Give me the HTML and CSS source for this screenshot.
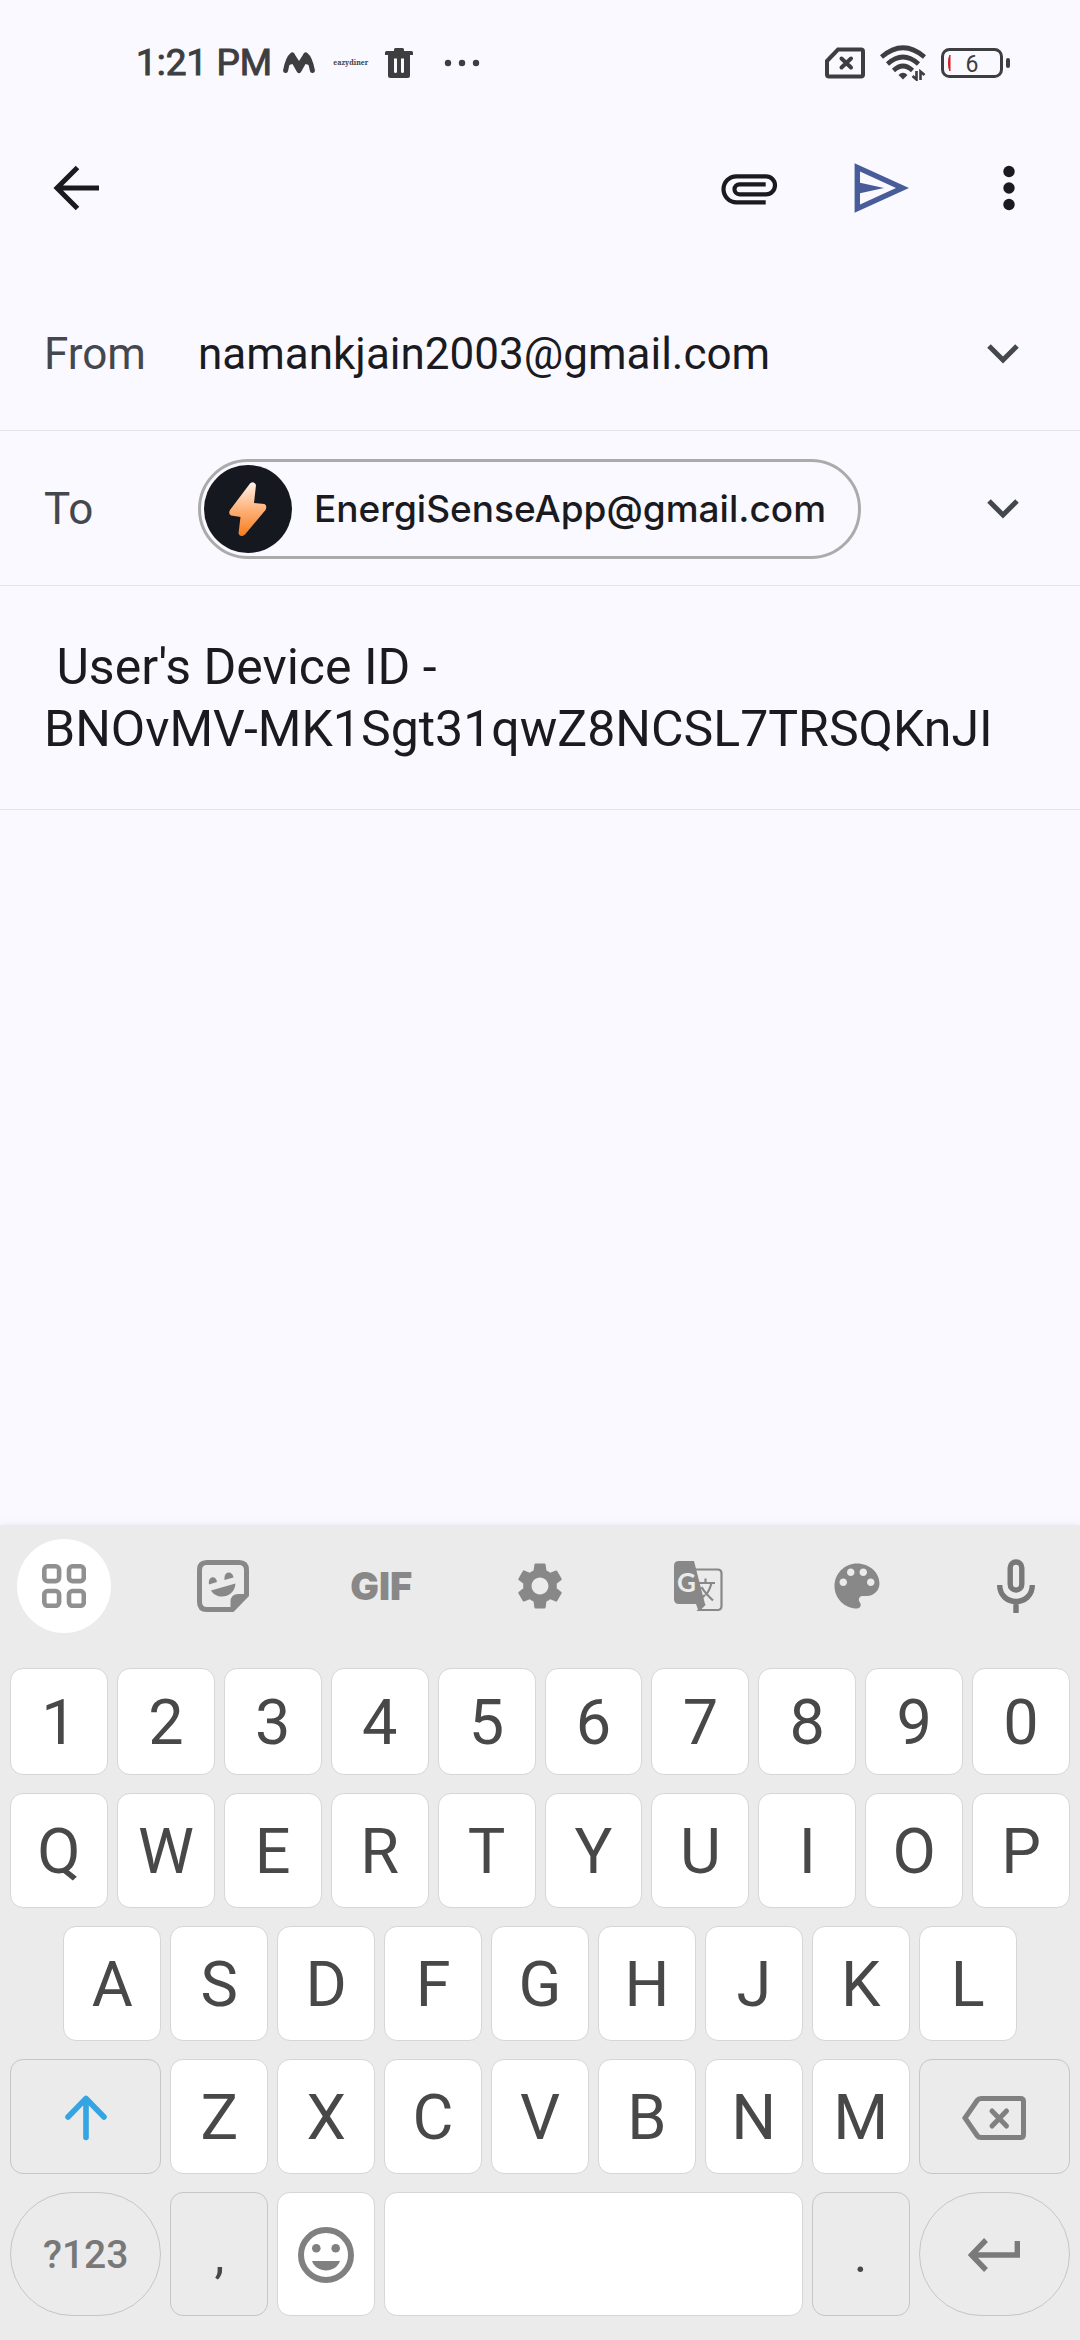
FILE: index.html
```html
<!DOCTYPE html>
<html lang="en">
<head>
<meta charset="utf-8">
<meta name="viewport" content="width=device-width">
<title>Compose</title>
<link rel="stylesheet" href="styles.css">
</head>
<body>
<header class="status">
  <div class="status-left">
    <span class="clock">1:21 PM</span>
    <svg class="logo" width="32" height="22" viewBox="0 0 32 22"><path d="M2.600 18.500C4 11 6 5.500 9.200 3M29.400 18.500C28 11 26 5.500 22.800 3" fill="none" stroke="#3e3e40" stroke-width="5" stroke-linecap="round"/><path d="M2 13L7.500 2Q9.500 0 11.500 2L16 9L20.500 2Q22.500 0 24.500 2L30 13L26 13L22.500 12L18 20Q16 22.500 14 20L9.500 12L6 13Z" fill="#3e3e40"/></svg>
    <span class="brand">eazydiner</span>
    <svg width="28" height="30" viewBox="0 0 28 30" fill="#3e3e40"><path fill-rule="evenodd" d="M0 4.500Q0 3 1.500 3H9V1.500Q9 0 10.500 0H17.500Q19 0 19 1.500V3H26.500Q28 3 28 4.500V7H25V27.500Q25 30 22.500 30H5.500Q3 30 3 27.500V7H0ZM9 10.500V23.500Q9 25 10.500 25T12 23.500V10.500ZM16 10.500V23.500Q16 25 17.500 25T19 23.500V10.500Z"/></svg>
    <svg class="dots" width="36" height="8" viewBox="0 0 36 8" fill="#3e3e40"><circle cx="4" cy="4" r="3.200"/><circle cx="18" cy="4" r="3.200"/><circle cx="32" cy="4" r="3.200"/></svg>
  </div>
  <div class="status-right">
    <svg width="40" height="32" viewBox="0 0 40 32" fill="none" stroke="#3e3e40" stroke-width="4"><path d="M2 14L13 2.500H36Q38 2.500 38 4.500V27.500Q38 29.500 36 29.500H4Q2 29.500 2 27.500Z"/><path d="M16.500 11.500L26 20.500M26 11.500L16.500 20.500" stroke-linecap="round"/></svg>
    <svg width="46" height="36" viewBox="0 0 46 36" fill="none" stroke="#3e3e40" stroke-width="4.600"><path d="M1.500 12Q23-6.500 44.500 12M7.500 19Q23 5 38.500 19M13.500 25.500Q23 16.500 32.500 25.500"/><path d="M18.500 30Q23 25.500 27.500 30L23 34.500Z" fill="#3e3e40" stroke="none"/><path d="M36.500 26V34.500L32.500 31M40.500 35V26.500L44.500 30" stroke-width="2.600"/></svg>
    <svg width="69" height="30" viewBox="0 0 69 30"><rect x="1.500" y="1.500" width="59" height="27" rx="7" fill="none" stroke="#3e3e40" stroke-width="3"/><path d="M9 7V23Q7.500 21 7.500 15T9 7Z" fill="#cf2029" stroke="#cf2029"/><rect x="65" y="10" width="4" height="10" rx="2" fill="#3e3e40"/><text x="31" y="23.500" text-anchor="middle" class="level">6</text></svg>
  </div>
</header>

<nav class="bar">
  <button class="icon back" aria-label="Back"><svg viewBox="0 0 66 66"><path d="M55 33H15M33.500 12.500L13 33L33.500 53.500" fill="none" stroke="#1b1b1f" stroke-width="5"/></svg></button>
  <button class="icon" aria-label="Attach file"><svg viewBox="0 0 66 66"><path d="M49.700 47.300H20.500a13 13 0 0 1 0-26H50a9 9 0 0 1 0 18H23.500a5 5 0 0 1 0-10H49.700" fill="none" stroke="#1b1b1f" stroke-width="4.200"/></svg></button>
  <button class="icon" aria-label="Send"><svg viewBox="0 0 66 66"><path fill="#475c98" fill-rule="evenodd" d="M8.600 8.300L63 33L8.600 57.700ZM14 16.500V27.700L38 33L14 38.300V49.500L50 33Z"/></svg></button>
  <button class="icon" aria-label="More options"><svg viewBox="0 0 66 66" fill="#1b1b1f"><circle cx="33" cy="16.500" r="5.700"/><circle cx="33" cy="33" r="5.700"/><circle cx="33" cy="49.500" r="5.700"/></svg></button>
</nav>

<main class="compose">
  <div class="field">
    <label class="label" for="from">From</label>
    <select class="from" id="from"><option>namankjain2003@gmail.com</option></select>
    <svg class="chevron" viewBox="0 0 34 22"><path d="M3 3L17 17L31 3"/></svg>
  </div>
  <div class="field">
    <span class="label">To</span>
    <button class="chip">
      <svg class="avatar" viewBox="0 0 88 88"><defs><linearGradient id="bolt" x1="0" y1="0" x2="0" y2="1"><stop offset="0" stop-color="#fff3ea"/><stop offset=".5" stop-color="#ffb27a"/><stop offset="1" stop-color="#f57c1f"/></linearGradient></defs><circle cx="44" cy="44" r="44" fill="#16181f"/><path d="M46 18.500Q50 15.500 52 20L50 38L60.500 39Q63.500 40.500 61.500 45L41 69.500Q36.500 73 34.500 68.500L36.500 52L27 50.500Q24 49 26 45Z" fill="url(#bolt)"/></svg>
      <span>EnergiSenseApp@gmail.com</span>
    </button>
    <button class="expand" aria-label="Add Cc or Bcc"><svg class="chevron" viewBox="0 0 34 22"><path d="M3 3L17 17L31 3"/></svg></button>
  </div>
  <div class="subject-row">
    <textarea class="subject" rows="2" aria-label="Subject"> User's Device ID -
BNOvMV-MK1Sgt31qwZ8NCSL7TRSQKnJI</textarea>
  </div>
  <textarea class="message" aria-label="Message"></textarea>
</main>

<section class="keyboard" aria-label="Keyboard">
  <div class="tools">
    <button class="tool active" aria-label="Features"><svg width="44" height="44" viewBox="0 0 44 44" fill="none" stroke="#909090" stroke-width="4.600"><rect x="2.300" y="2.300" width="14.800" height="14.800" rx="3.500"/><rect x="27" y="2.300" width="14.800" height="14.800" rx="3.500"/><rect x="2.300" y="27" width="14.800" height="14.800" rx="3.500"/><rect x="27" y="27" width="14.800" height="14.800" rx="3.500"/></svg></button>
    <button class="tool" aria-label="Stickers"><svg width="52" height="52" viewBox="0 0 52 52" fill="#888"><path fill-rule="evenodd" d="M10 0H42Q52 0 52 10V36L36.500 52H10Q0 52 0 42V10Q0 0 10 0ZM10 5Q5 5 5 10V42Q5 47 10 47H33.500V42Q33.500 34 41.500 34H47V10Q47 5 42 5Z"/><path d="M12 24.500C10.500 15.500 19.500 15 20 22ZM27.500 20C26.500 10.500 35.500 10.500 36.500 17.500ZM14 30.500L38.500 23.500C37.500 38 20 40.500 14 30.500Z"/></svg></button>
    <button class="tool gif">GIF</button>
    <button class="tool" aria-label="Settings"><svg width="56" height="56" viewBox="0 0 24 24" fill="#888"><path d="M19.140 12.940c.040-.300.060-.610.060-.940 0-.320-.020-.640-.070-.940l2.030-1.580c.180-.140.230-.410.120-.610l-1.920-3.320c-.120-.220-.370-.290-.590-.220l-2.390.960c-.500-.380-1.030-.700-1.620-.940l-.360-2.540c-.040-.240-.240-.410-.480-.410h-3.840c-.240 0-.430.170-.470.410l-.360 2.540c-.590.240-1.130.570-1.620.940l-2.390-.960c-.220-.080-.470 0-.590.220L2.740 8.870c-.120.210-.080.470.120.610l2.030 1.580c-.050.300-.090.630-.090.940s.020.640.070.940l-2.030 1.580c-.180.140-.230.410-.120.610l1.920 3.320c.120.220.370.290.590.220l2.390-.960c.500.380 1.030.700 1.620.940l.360 2.540c.050.240.240.410.480.410h3.840c.240 0 .440-.170.470-.410l.360-2.540c.590-.240 1.130-.560 1.620-.940l2.390.960c.220.080.470 0 .590-.220l1.920-3.320c.120-.220.070-.470-.120-.610l-2.010-1.580zM12 15.600c-1.980 0-3.600-1.620-3.600-3.600s1.620-3.600 3.600-3.600 3.600 1.620 3.600 3.600-1.620 3.600-3.600 3.600z"/></svg></button>
    <button class="tool" aria-label="Translate"><svg width="49" height="51" viewBox="0 0 49 51"><path d="M20 8.500H43.500Q47.500 8.500 47.500 12.500V45Q47.500 49 43.500 49H25L31 43" fill="none" stroke="#888" stroke-width="2.200"/><path d="M5 0H20L31 43L24.500 50L22 43H5Q0 43 0 38V5Q0 0 5 0Z" fill="#888"/><path d="M24 22H41M31.500 17.500V22M37.500 22Q35 31 31.500 34" fill="none" stroke="#888" stroke-width="2.200"/><path d="M31 34L26 38.500M27.500 26Q31 32 39 39.500" fill="none" stroke="#888" stroke-width="2.200"/><text x="12.500" y="31" text-anchor="middle" class="translate-g">G</text></svg></button>
    <button class="tool" aria-label="Themes"><svg width="60" height="60" viewBox="0 0 24 24" fill="#888"><path d="M12 3c-4.970 0-9 4.030-9 9s4.030 9 9 9c.830 0 1.500-.670 1.500-1.500 0-.390-.150-.740-.390-1.010-.230-.260-.380-.610-.380-.990 0-.830.670-1.500 1.500-1.500H16c2.760 0 5-2.240 5-5 0-4.420-4.030-8-9-8zm-5.500 9c-.830 0-1.500-.670-1.500-1.500S5.670 9 6.500 9 8 9.670 8 10.500 7.330 12 6.500 12zm3-4C8.670 8 8 7.330 8 6.500S8.670 5 9.500 5s1.500.670 1.500 1.500S10.330 8 9.500 8zm5 0c-.830 0-1.500-.670-1.500-1.500S13.670 5 14.500 5s1.500.670 1.500 1.500S15.330 8 14.500 8zm3 4c-.830 0-1.500-.670-1.500-1.500S16.670 9 17.500 9s1.500.670 1.500 1.500-.670 1.500-1.500 1.500z"/></svg></button>
    <button class="tool" aria-label="Voice input"><svg width="38" height="54" viewBox="0 0 38 54" fill="none" stroke="#787878" stroke-width="5.400"><rect x="13.200" y="3" width="11.600" height="28" rx="5.800"/><path d="M2.700 26C2.700 48 35.300 48 35.300 26M19 42V54"/></svg></button>
  </div>

  <div class="row numbers">
    <button class="key">1</button><button class="key">2</button><button class="key">3</button><button class="key">4</button><button class="key">5</button><button class="key">6</button><button class="key">7</button><button class="key">8</button><button class="key">9</button><button class="key">0</button>
  </div>
  <div class="row">
    <button class="key">Q</button><button class="key">W</button><button class="key">E</button><button class="key">R</button><button class="key">T</button><button class="key">Y</button><button class="key">U</button><button class="key">I</button><button class="key">O</button><button class="key">P</button>
  </div>
  <div class="row">
    <button class="key indent">A</button><button class="key">S</button><button class="key">D</button><button class="key">F</button><button class="key">G</button><button class="key">H</button><button class="key">J</button><button class="key">K</button><button class="key">L</button>
  </div>
  <div class="row">
    <button class="key wide plain" aria-label="Shift"><svg width="42" height="46" viewBox="0 0 42 46" fill="none" stroke="#35a4e2" stroke-width="5.600" stroke-linecap="round" stroke-linejoin="round"><path d="M21 42.500V3.500M3 22L21 3.500L39 22"/></svg></button>
    <button class="key">Z</button><button class="key">X</button><button class="key">C</button><button class="key">V</button><button class="key">B</button><button class="key">N</button><button class="key">M</button>
    <button class="key wide plain" aria-label="Backspace"><svg width="64" height="44" viewBox="0 0 64 44" fill="none" stroke="#808080" stroke-width="5"><path d="M3 22L15.500 4Q16.500 2.500 19 2.500H58.500Q61.500 2.500 61.500 5.500V38.500Q61.500 41.500 58.500 41.500H19Q16.500 41.500 15.500 40Z"/><path d="M30 15L44.500 30M44.500 15L30 30" stroke-linecap="round"/></svg></button>
  </div>
  <div class="row last">
    <button class="key wide plain pill mode">?123</button>
    <button class="key plain mark">,</button>
    <button class="key" aria-label="Emoji"><svg width="56" height="56" viewBox="0 0 56 56"><circle cx="28" cy="28" r="25" fill="none" stroke="#808080" stroke-width="6"/><circle cx="18.300" cy="21.300" r="4.300" fill="#808080"/><circle cx="37.700" cy="21.300" r="4.300" fill="#808080"/><path d="M14 34H42C38 46.500 18 46.500 14 34Z" fill="#808080"/></svg></button>
    <button class="key space" aria-label="Space"></button>
    <button class="key plain mark">.</button>
    <button class="key wide plain pill" aria-label="Enter"><svg width="52" height="34" viewBox="0 0 52 34" fill="none" stroke="#7a7a7a" stroke-width="5.400"><path d="M49.300 3V17H4M18 2L3.500 17L18 32"/></svg></button>
  </div>
</section>
</body>
</html>
```
FILE: styles.css
```css
* { box-sizing: border-box; }

body {
  margin: 0;
  min-height: 100vh;
  display: flex;
  flex-direction: column;
  background: #f9f9ff;
  color: #1b1b1f;
  font-family: Roboto, sans-serif;
}

button, select, textarea {
  margin: 0;
  padding: 0;
  border: 0;
  background: none;
  color: inherit;
  font: inherit;
  outline: none;
}

svg { display: block; flex: none; }

/* status bar */
.status {
  display: flex;
  align-items: center;
  justify-content: space-between;
  height: 125px;
  padding: 0 70px 0 136px;
  color: #3e3e40;
}
.status-left, .status-right { display: flex; align-items: center; }
.status-right { gap: 15px; }
.clock { font-size: 37px; line-height: 44px; -webkit-text-stroke: 1px #3e3e40; }
.logo { margin: 0 18px 0 11px; }
.brand { width: 52px; font: 700 7px/10px "Noto Serif", "DejaVu Serif", serif; }
.dots { margin-left: 31px; }
.level { font-size: 23px; fill: #3e3e40; }

/* action bar */
.bar {
  display: flex;
  align-items: center;
  gap: 64px;
  height: 126px;
  padding: 0 38px 0 44px;
}
.icon { width: 66px; height: 66px; }
.back { margin-right: auto; }

/* compose fields */
.compose { flex: 1; display: flex; flex-direction: column; margin-top: 25px; }
.field {
  display: flex;
  align-items: center;
  height: 155px;
  padding: 1px 60px 0 44px;
  border-bottom: 1px solid #e4e4ea;
}
.label { width: 154px; color: #45474e; font-size: 44px; line-height: 56px; }
.from { flex: 1; appearance: none; font-size: 44px; line-height: 56px; }
.chevron { width: 34px; height: 22px; fill: none; stroke: #44474c; stroke-width: 5; }
.chip {
  display: flex;
  align-items: center;
  gap: 22px;
  height: 100px;
  margin-right: auto;
  padding: 0 32px 0 3px;
  border: 3px solid #ababab;
  border-radius: 50px;
  font: 500 37px/48px Inter, sans-serif;
}
.avatar { width: 88px; height: 88px; }
.subject-row { padding: 50px 44px 49px; border-bottom: 1px solid #e4e4ea; }
.subject, .message { display: block; width: 100%; resize: none; overflow: hidden; }
.subject { font-size: 50px; line-height: 62px; }
.message { flex: 1; padding: 40px 44px; font-size: 44px; }

/* keyboard */
.keyboard {
  display: flex;
  flex-direction: column;
  gap: 18px;
  padding: 14px 10px 24px;
  background: #ebebeb;
  box-shadow: 0 0 8px rgba(0, 0, 0, .08);
  color: #484848;
}
.tools { display: flex; justify-content: space-between; padding: 0 7px 17px; }
.tool {
  display: flex;
  align-items: center;
  justify-content: center;
  width: 94px;
  height: 94px;
  border-radius: 50%;
}
.active { background: #fff; }
.gif { color: #888; font: 900 38px/44px Inter, sans-serif; }
.translate-g { font: 700 26px Lato, sans-serif; fill: #ebebeb; }

.row {
  display: grid;
  grid-template-columns: repeat(20, 1fr);
  column-gap: 9px;
  height: 115px;
}
.numbers { height: 107px; }
.last { height: 124px; }
.key {
  grid-column: span 2;
  display: flex;
  align-items: center;
  justify-content: center;
  min-width: 0;
  padding-top: 2px;
  border: 1px solid #d6d6d6;
  border-radius: 13px;
  background: #fff;
  font-size: 63px;
  line-height: 76px;
}
.indent { grid-column: 2 / span 2; }
.wide { grid-column: span 3; }
.space { grid-column: span 8; }
.plain { background: #ebebeb; border-color: #c6c6c6; }
.pill { border-radius: 62px; }
.mode { color: #787878; font-size: 39px; font-weight: 500; }
.mark { font-size: 50px; }
```
